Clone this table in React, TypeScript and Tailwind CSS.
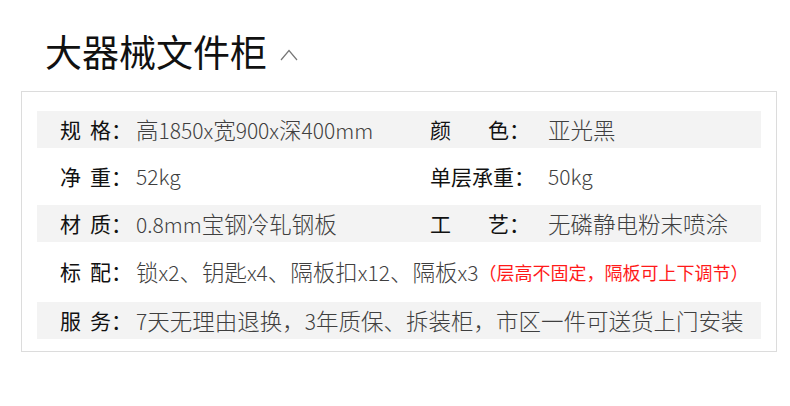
import React from "react";

const cjk = '"Noto Sans CJK SC", "Noto Sans", sans-serif';

// ASCII runs stay at the body size, the CJK runs are set a bit larger like the reference
function Value({ text }: { text: string }) {
  const parts = text.split(/([\x00-\x7F]+)/).filter(Boolean);
  return (
    <span className="whitespace-nowrap font-light text-[#3f3f3f]">
      {parts.map((p, i) =>
        /^[\x00-\x7F]+$/.test(p) ? (
          <span key={i} className="text-[21px]">
            {p}
          </span>
        ) : (
          <span key={i} className="text-[22.5px]">
            {p}
          </span>
        )
      )}
    </span>
  );
}

function ShortLabel({ a, b, wide }: { a: string; b: string; wide?: boolean }) {
  return (
    <span className="whitespace-nowrap text-[21px] text-[#111]">
      {a}
      <span className={wide ? "ml-[37px]" : "ml-[9px]"}>{b}</span>：
    </span>
  );
}

type Row = {
  left: [string, string];
  value: string;
  note?: string;
  right?: { label: React.ReactNode; value: string };
  gray: boolean;
  tall?: boolean;
};

const rows: Row[] = [
  {
    left: ["规", "格"],
    value: "高1850x宽900x深400mm",
    right: { label: <ShortLabel a="颜" b="色" wide />, value: "亚光黑" },
    gray: true,
  },
  {
    left: ["净", "重"],
    value: "52kg",
    right: { label: <span className="text-[21px] text-[#111]">单层承重：</span>, value: "50kg" },
    gray: false,
  },
  {
    left: ["材", "质"],
    value: "0.8mm宝钢冷轧钢板",
    right: { label: <ShortLabel a="工" b="艺" wide />, value: "无磷静电粉末喷涂" },
    gray: true,
  },
  {
    left: ["标", "配"],
    value: "锁x2、钥匙x4、隔板扣x12、隔板x3",
    note: "（层高不固定，隔板可上下调节）",
    gray: false,
    tall: true,
  },
  {
    left: ["服", "务"],
    value: "7天无理由退换，3年质保、拆装柜，市区一件可送货上门安装",
    gray: true,
  },
];

export default function App() {
  return (
    <div className="h-[406px] w-[790px] bg-white" style={{ fontFamily: cjk }}>
      <div className="flex items-center pl-[45px] pt-[26px]">
        <h1 className="text-[37px] font-normal leading-[50px] text-[#111]">大器械文件柜</h1>
        <svg className="ml-[13px] mt-[8px]" width="18" height="12" viewBox="0 0 18 12">
          <polyline points="1,11 9,1.5 17,11" fill="none" stroke="#777" strokeWidth="1.2" />
        </svg>
      </div>

      <div className="ml-[21px] mt-[15px] flex w-[756px] flex-col gap-[10px] border border-[#dcdcdc] px-[15px] pb-[12px] pt-[19px]">
        {rows.map((r, i) => (
          <div
            key={i}
            className={`flex items-center pl-[23px] ${r.tall ? "h-[40px]" : "h-[37px]"} ${
              r.gray ? "bg-[#f3f3f3]" : ""
            }`}
          >
            <div className={r.right ? "flex w-[370px] items-center" : "flex items-center"}>
              <span className="w-[76px] shrink-0">
                <ShortLabel a={r.left[0]} b={r.left[1]} />
              </span>
              <Value text={r.value} />
              {r.note && (
                <span className="whitespace-nowrap text-[18px] text-[#ff1a1a]">{r.note}</span>
              )}
            </div>
            {r.right && (
              <div className="flex items-center">
                <span className="w-[118px] shrink-0">{r.right.label}</span>
                <Value text={r.right.value} />
              </div>
            )}
          </div>
        ))}
      </div>
    </div>
  );
}
